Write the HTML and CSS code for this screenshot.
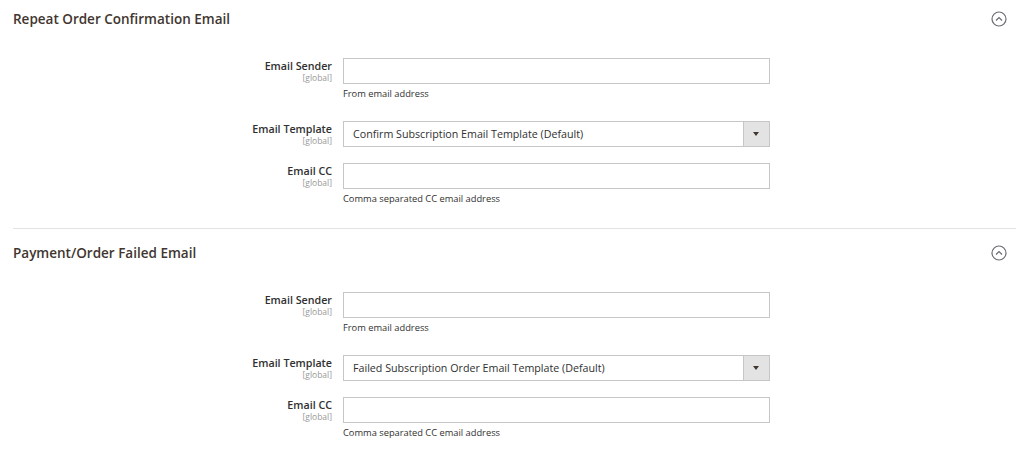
FILE: index.html
```html
<!DOCTYPE html>
<html lang="en">
<head>
  <meta charset="UTF-8">
  <meta name="viewport" content="width=device-width, initial-scale=1.0">
  <title>Subscription Emails</title>
  <link rel="stylesheet" href="styles.css">
</head>
<body>
  <div id="config-page">
    <!-- Repeat Order -->
    <div class="section">
      <div class="section-head">
        <h2>Repeat Order Confirmation Email</h2>
        <svg class="toggle" width="16" height="16" viewBox="0 0 16 16">
          <circle cx="8" cy="8" r="7" fill="none" stroke="#6b6b73" stroke-width="1.2"/>
          <path d="M5 9.5 L8 6.5 L11 9.5" fill="none" stroke="#6b6b73" stroke-width="1.2"/>
        </svg>
      </div>
      <div class="fields">
        <div class="field-row">
          <div class="label">Email Sender<span class="scope">[global]</span></div>
          <div class="control">
            <input type="text">
            <p class="note">From email address</p>
          </div>
        </div>
        <div class="field-row">
          <div class="label">Email Template<span class="scope">[global]</span></div>
          <div class="control">
            <div class="select">
              <span class="select-value">Confirm Subscription Email Template (Default)</span>
              <span class="select-btn"></span>
            </div>
          </div>
        </div>
        <div class="field-row">
          <div class="label">Email CC<span class="scope">[global]</span></div>
          <div class="control">
            <input type="text">
            <p class="note">Comma separated CC email address</p>
          </div>
        </div>
      </div>
    </div>

    <!-- Payment Failed -->
    <div class="section">
      <div class="section-head">
        <h2>Payment/Order Failed Email</h2>
        <svg class="toggle" width="16" height="16" viewBox="0 0 16 16">
          <circle cx="8" cy="8" r="7" fill="none" stroke="#6b6b73" stroke-width="1.2"/>
          <path d="M5 9.5 L8 6.5 L11 9.5" fill="none" stroke="#6b6b73" stroke-width="1.2"/>
        </svg>
      </div>
      <div class="fields">
        <div class="field-row">
          <div class="label">Email Sender<span class="scope">[global]</span></div>
          <div class="control">
            <input type="text">
            <p class="note">From email address</p>
          </div>
        </div>
        <div class="field-row">
          <div class="label">Email Template<span class="scope">[global]</span></div>
          <div class="control">
            <div class="select">
              <span class="select-value">Failed Subscription Order Email Template (Default)</span>
              <span class="select-btn"></span>
            </div>
          </div>
        </div>
        <div class="field-row">
          <div class="label">Email CC<span class="scope">[global]</span></div>
          <div class="control">
            <input type="text">
            <p class="note">Comma separated CC email address</p>
          </div>
        </div>
      </div>
    </div>
  </div>
</body>
</html>
```

FILE: styles.css
```css
/* General Styling */
body {
  margin: 0;
  padding: 0;
  background: #fff;
  font-family: 'Open Sans', sans-serif;
  color: #303030;
}

#config-page {
  padding: 0 8px 0 13px;
}

/* Section */
.section + .section {
  border-top: 1px solid #e3e3e3;
  padding-top: 5px;
}

.section-head {
  height: 37px;
  display: flex;
  align-items: center;
  justify-content: space-between;
}

.section-head h2 {
  margin: 0;
  font-size: 13.5px;
  font-weight: 600;
  color: #41362f;
}

.toggle {
  margin-right: 9px;
}

.fields {
  padding: 21px 0 18px;
}

/* Field rows */
.field-row {
  display: grid;
  grid-template-columns: 319px 427px;
  column-gap: 11px;
  margin-bottom: 16px;
}

.field-row:last-child {
  margin-bottom: 0;
}

.label {
  text-align: right;
  font-size: 10.7px;
  font-weight: 600;
  line-height: 13px;
  padding-top: 2px;
  color: #303030;
}

.scope {
  display: block;
  font-size: 8.5px;
  font-weight: 400;
  line-height: 10px;
  color: #999;
}

input {
  display: block;
  box-sizing: border-box;
  width: 100%;
  height: 26px;
  margin: 0;
  border: 1px solid #c6c6c6;
  border-radius: 0;
  background: #fff;
}

.note {
  margin: 3px 0 5px;
  font-size: 9.3px;
  line-height: 13px;
  color: #303030;
}

/* Select */
.select {
  display: flex;
  box-sizing: border-box;
  height: 26px;
  border: 1px solid #c6c6c6;
}

.select-value {
  flex: 1;
  padding-left: 9px;
  font-size: 10.7px;
  line-height: 24px;
  color: #303030;
}

.select-btn {
  width: 25px;
  background: #e3e3e3;
  border-left: 1px solid #c6c6c6;
  position: relative;
}

.select-btn::after {
  content: "";
  position: absolute;
  left: 9px;
  top: 10px;
  border-left: 3.5px solid transparent;
  border-right: 3.5px solid transparent;
  border-top: 4px solid #41362f;
}
```
